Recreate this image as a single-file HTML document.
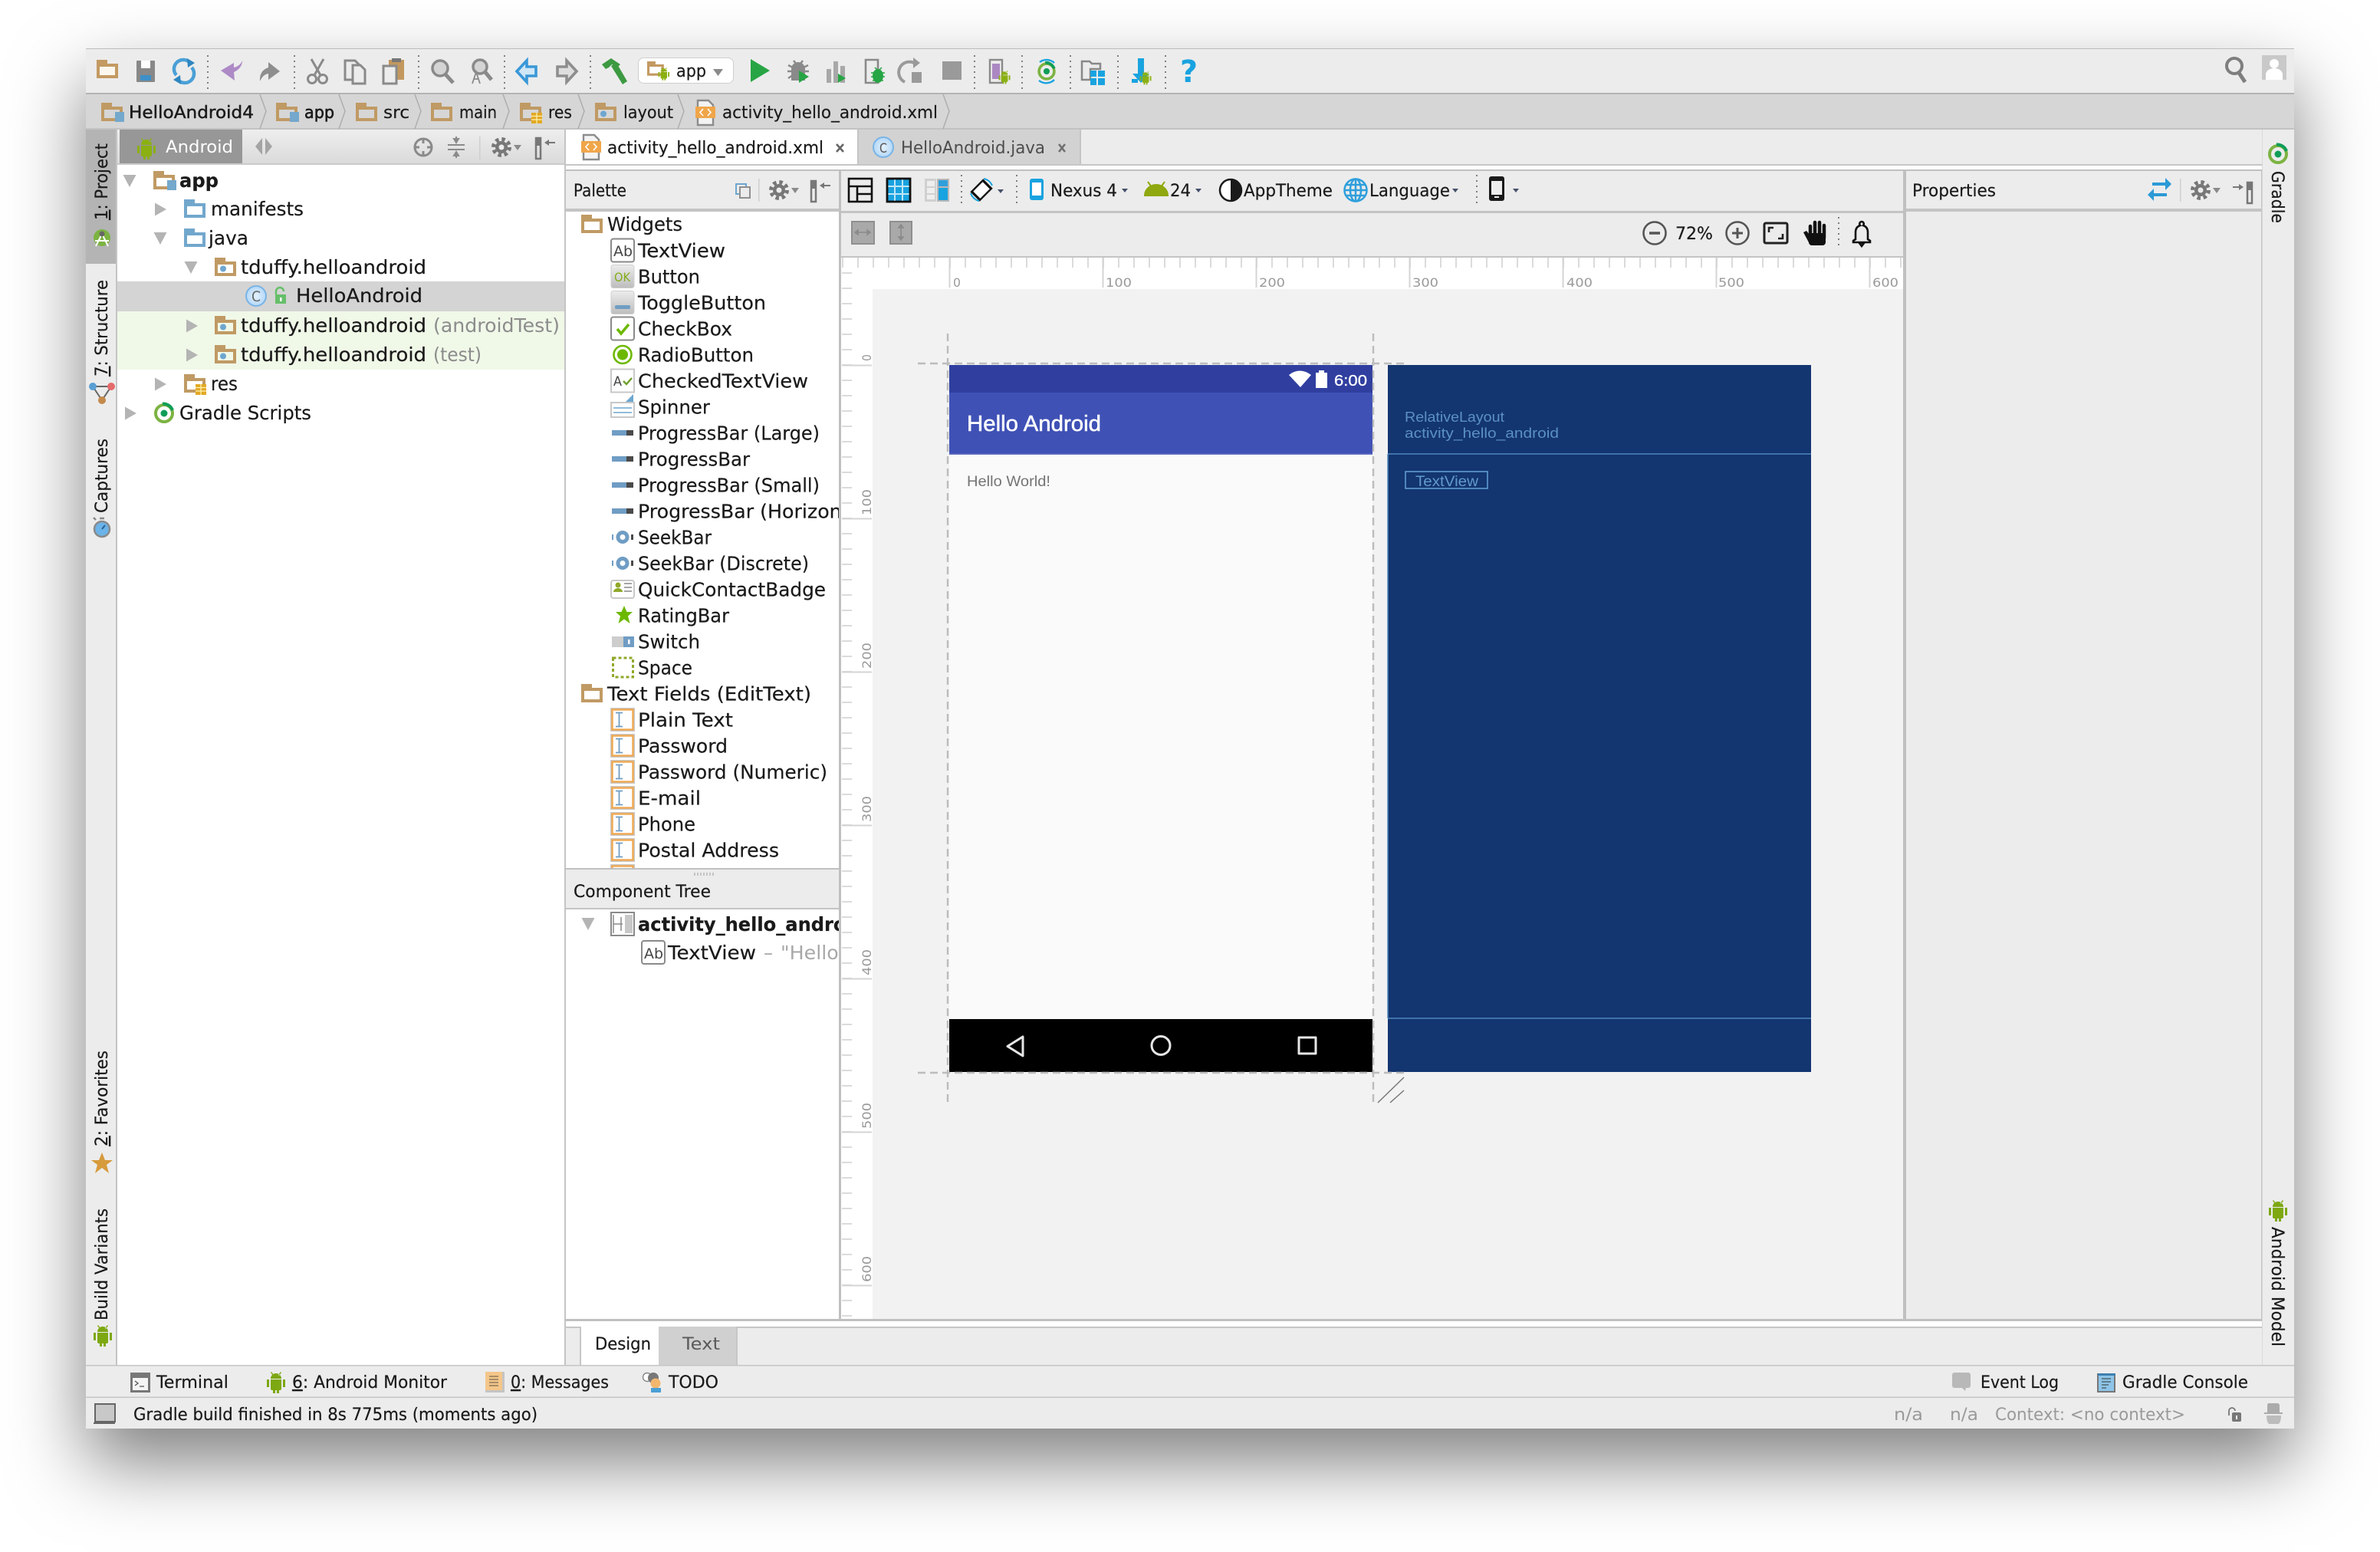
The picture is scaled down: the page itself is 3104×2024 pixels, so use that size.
<!DOCTYPE html>
<html><head><meta charset="utf-8"><title>Android Studio</title>
<style>
html,body{margin:0;padding:0;background:#fff;width:3104px;height:2024px;overflow:hidden}
#w{position:absolute;left:112px;top:63px;width:2880px;height:1800px;box-shadow:0 44px 90px rgba(0,0,0,.5);background:#ececec}
svg{position:absolute;left:0;top:0}
text{font-family:"DejaVu Sans","Liberation Sans",sans-serif;fill:#1a1a1a}
.t{font-size:25px;stroke:#1a1a1a;stroke-width:.2}.s{font-size:22px;stroke:#1a1a1a;stroke-width:.2}.g{fill:#8c8c8c;stroke:none}.r{font-size:16px;fill:#9a9a9a}.v{font-size:22px;stroke:#1a1a1a;stroke-width:.2}
.n{stroke:none}
.l{font-family:"Liberation Sans",sans-serif}
</style></head><body><div id="w"></div>
<svg width="3104" height="2024" viewBox="0 0 3104 2024" xmlns="http://www.w3.org/2000/svg">
<defs>
<linearGradient id="hdr" x1="0" y1="0" x2="0" y2="1"><stop offset="0" stop-color="#eeeeee"/><stop offset="1" stop-color="#dadada"/></linearGradient>
<linearGradient id="btn" x1="0" y1="0" x2="0" y2="1"><stop offset="0" stop-color="#ececec"/><stop offset="1" stop-color="#bdbdbd"/></linearGradient>
<radialGradient id="cc"><stop offset="0" stop-color="#e4f1fd"/><stop offset="1" stop-color="#b4d8f7"/></radialGradient>
<path id="f" d="M0 0h14v5h14v19H0zM4 9v11h20V9z"/>
<g id="a"><path d="M6 9a7 7 0 0 1 14 0zM6 10h14v12a2 2 0 0 1-2 2h-1v4h-3v-4h-2v4h-3v-4H8a2 2 0 0 1-2-2zM1 10h3v10H1zM22 10h3v10h-3zM7 0l3 4-1 1-3-4zM19 0l-3 4 1 1 3-4z"/></g>
<g id="gear"><circle r="8" fill="#777"/><circle r="10.5" fill="none" stroke="#777" stroke-width="5" stroke-dasharray="4.4 3.85"/><circle r="3.5" fill="#ececec"/></g>
<g id="pin"><rect x="0" y="0" width="6" height="27" fill="none" stroke="#777" stroke-width="2.5"/><rect x="0" y="0" width="6" height="10" fill="#777"/><path d="M11 6l6-4v3h8v2h-8v3z" fill="#777"/></g>
<g id="xml"><path d="M3 1h14l6 6v26H3z" fill="#f4f4f4" stroke="#8c8c8c" stroke-width="2.4"/><rect x="0" y="9" width="26" height="15" fill="#f0a64a"/><path d="M10 12l-4 4.500 4 4.500M16 12l4 4.500-4 4.500" fill="none" stroke="#fff" stroke-width="1.600"/></g>
<g id="pkg"><path d="M0 0h14v5h14v19H0zM4 9v11h20V9z" fill="#c09a64"/><circle cx="11" cy="14.500" r="4" fill="#6ea6cf"/></g>
<g id="mod"><path d="M0 0h14v5h14v19H0zM4 9v11h20V9z" fill="#c09a64"/><rect x="18" y="12" width="12" height="13" fill="#74a8cc"/></g>
<g id="resf"><path d="M0 0h14v5h14v19H0zM4 9v11h20V9z" fill="#c09a64"/><rect x="15" y="13" width="14" height="14" fill="#e2a925"/><path d="M15 17.500h14M15 22h14M22 13v14" stroke="#fff2b0" stroke-width="1.200"/></g>
<g id="chev"><path d="M0 0L8 22 0 45" fill="none" stroke="#aeaeae" stroke-width="1.500"/></g>
<g id="ab"><rect x="-15" y="-15" width="30" height="30" rx="3" fill="#fff" stroke="#8a8a8a" stroke-width="2"/></g>
<g id="pb"><rect x="-14" y="-3.500" width="19" height="7" fill="#709dc4"/><rect x="5" y="-3.500" width="9" height="7" fill="#4a4a4a"/></g>
<g id="sb"><circle r="6" fill="#fff" stroke="#709dc4" stroke-width="5"/><rect x="-14" y="-3.500" width="2" height="7" fill="#709dc4"/><rect x="11" y="-3.500" width="3" height="7" fill="#4a4a4a"/></g>
<g id="et"><rect x="-16" y="-15.500" width="32" height="31" fill="#c8c8c8"/><rect x="-13.500" y="-13" width="27" height="26" fill="#fff" stroke="#f0a850" stroke-width="2.400"/><path d="M-9-9h9M-4.500-9v18M-9 9h9" fill="none" stroke="#709dc4" stroke-width="1.800"/></g>
<g id="tri"><path d="M-8.500-8h17L0 8z" fill="#b4b4b4"/></g>
<g id="trr"><path d="M-7-8.500L8 0-7 8.500z" fill="#b4b4b4"/></g>
<g id="grad"><circle r="11" fill="none" stroke="#7cb342" stroke-width="4"/><path d="M-2-12.500A13 13 0 0 1 11-4" fill="none" stroke="#0f9d58" stroke-width="4"/><circle r="4.500" fill="#0f9d58"/></g>
<g id="cls"><circle r="13" fill="url(#cc)" stroke="#7ab4e6" stroke-width="2"/></g>
<path id="cdn" d="M0 0h8l-4 5z" fill="#46506a"/>
<path id="cgr" d="M0 0h10l-5 7z" fill="#8a8a8a"/>
</defs>

<!-- main toolbar -->
<rect x="112" y="63" width="2880" height="59" fill="#ececec"/>
<rect x="112" y="63" width="2880" height="1" fill="#bdbdbd"/>
<rect x="112" y="121" width="2880" height="2" fill="#b4b4b4"/>
<rect x="112" y="123" width="2880" height="45" fill="#d6d6d6"/>
<rect x="112" y="167" width="2880" height="2" fill="#c2c2c2"/>
<g stroke="#808080" stroke-width="2" stroke-dasharray="2 5">
<path d="M271 72v45M384 72v45M546 72v45M658 72v45M770 72v45M1271 72v45M1333 72v45M1396 72v45M1458 72v45M1520 72v45"/></g>
<use href="#f" transform="translate(126 78)" fill="#c39a62"/><rect x="130" y="87" width="20" height="11" fill="#fbf7ef"/>
<g transform="translate(190 93)"><rect x="-12" y="-14" width="24" height="28" rx="1" fill="#888"/><rect x="-6" y="-14" width="12" height="10" fill="#fff"/><rect x="-7" y="5" width="14" height="7" fill="#3e90c8"/></g>
<g transform="translate(240 93)"><g fill="none" stroke="#4aa0d6" stroke-width="4.500"><path d="M8-11A12 12 0 0 0-10 5"/><path d="M-8 11A12 12 0 0 0 10-5"/></g><path d="M4-17L14-11 5-5zM-4 17L-14 11-5 5z" fill="#2e86c1"/></g>
<path transform="translate(302 93)" d="M14-14C14-6 8-1 3 1L4 12-14-1 3-11 3-5C8-6 12-9 14-14z" fill="#ad8ac6"/>
<path transform="translate(352 93)" d="M-13 13Q-14-1-2-5V-12L13 0-2 11V3Q-9 4-13 13z" fill="#8e8e8e"/>
<g transform="translate(414 93)" fill="none" stroke="#8a8a8a" stroke-width="3"><path d="M-8-16L4 5M8-16L-4 5"/><circle cx="-7" cy="10" r="5.500"/><circle cx="7" cy="10" r="5.500"/></g>
<g transform="translate(463 93)" fill="#ececec" stroke="#8a8a8a" stroke-width="3"><path d="M-13-14h13l5 5v20h-18z"/><path d="M-3-8h10l6 6v18H-3z"/></g>
<g transform="translate(513 93)"><rect x="-6" y="-15" width="20" height="26" fill="#c2985f"/><rect x="-2" y="-17" width="12" height="5" fill="#777"/><path d="M-13-7H4v23h-17z" fill="#ececec" stroke="#8a8a8a" stroke-width="3"/></g>
<g transform="translate(576 93)"><circle cx="-2" cy="-4" r="10" fill="#d4d4d4" stroke="#8a8a8a" stroke-width="3.500"/><path d="M5 4l10 11" stroke="#8a8a8a" stroke-width="5"/></g>
<g transform="translate(626 93)"><circle cx="0" cy="-6" r="9" fill="#d4d4d4" stroke="#8a8a8a" stroke-width="3.500"/><path d="M6 0l9 11" stroke="#8a8a8a" stroke-width="5"/><path d="M-10 16l5-15 5 15M-8 10h6" fill="none" stroke="#8a8a8a" stroke-width="1.800"/></g>
<path transform="translate(687 93)" d="M-13 0L0-14V-6H12V6H0V14z" fill="#d0e7f6" stroke="#3a98d8" stroke-width="3.600"/>
<path transform="translate(739 93)" d="M13 0L0-14V-6H-12V6H0V14z" fill="#dedede" stroke="#8e8e8e" stroke-width="3.600"/>
<g transform="translate(801 93)" fill="#3c9a42"><path d="M-16-9L-4-17 8-9 4-5-3-9-7-5-11-3z"/><path d="M-4-7L3-11 17 13 11 17z"/></g>
<rect x="832.500" y="75.500" width="124" height="33" rx="7" fill="#fff" stroke="#cfcfcf"/>
<use href="#f" transform="translate(844 80) scale(.78)" fill="#c39a62"/><use href="#a" transform="translate(858 88) scale(.6)" fill="#8bb011"/>
<text class="s" x="882" y="100" textLength="39" lengthAdjust="spacingAndGlyphs">app</text>
<use href="#cgr" transform="translate(930 90) scale(1.300)"/>
<path d="M979 77L1004 92 979 107z" fill="#27a544"/>
<g transform="translate(1041 93)"><circle cy="-3" r="9" fill="#8a8a8a"/><path d="M-13-8L-7-5M13-8L7-5M-14 0h6M14 0h-6M-13 9l6-4M-6-14l3 4M6-14l-3 4" stroke="#8a8a8a" stroke-width="2.500"/><rect x="-9" y="-3" width="18" height="15" fill="#8a8a8a"/><path d="M1-1L14 7 1 15z" fill="#27a544"/></g>
<g transform="translate(1089 93)" fill="#a8a8a8"><rect x="-11" y="-3" width="6" height="18"/><rect x="-2" y="-13" width="6" height="28"/><rect x="7" y="-7" width="6" height="22"/><path d="M4 3l10 6-10 6z" fill="#27a544"/></g>
<g transform="translate(1139 93)"><path d="M-10-15h16v30h-16z" fill="#ececec" stroke="#8a8a8a" stroke-width="2.600"/><ellipse cx="6" cy="6" rx="7" ry="9" fill="#27a544"/><path d="M-3 2h18M-3 7h18M-1 12h14M2-5l3 3M11-5l-3 3" stroke="#27a544" stroke-width="1.500"/></g>
<g transform="translate(1189 93)"><path d="M-9 14A12 12 0 0 1 3-11" fill="none" stroke="#9a9a9a" stroke-width="4"/><path d="M2-18l9 7-9 7z" fill="#9a9a9a"/><rect x="0" y="1" width="13" height="14" fill="#9a9a9a"/></g>
<rect x="1229" y="80" width="25" height="24" fill="#9a9a9a"/>
<g transform="translate(1303 93)"><rect x="-12" y="-15" width="16" height="30" fill="#ececec" stroke="#8a8a8a" stroke-width="2.400"/><rect x="-9" y="-10" width="10" height="20" fill="#ab88c2"/><use href="#a" transform="translate(-1 -1) scale(.62)" fill="#8bb011"/></g>
<g transform="translate(1365 93)"><use href="#grad" transform="scale(.9)"/><path d="M-9-12A15 15 0 0 1 10-11M-10 12A15 15 0 0 0 10 11" fill="none" stroke="#19a3e0" stroke-width="2.400"/></g>
<g transform="translate(1425 93)"><path d="M-14-13h10l3 3h11v7H-3v14h-11z" fill="none" stroke="#888" stroke-width="2.500"/><rect x="-3" y="-1" width="8" height="8" fill="#19a3e0"/><rect x="7" y="-1" width="9" height="8" fill="#19a3e0"/><rect x="-3" y="9" width="8" height="9" fill="#19a3e0"/><rect x="7" y="9" width="9" height="9" fill="#19a3e0"/></g>
<g transform="translate(1488 93)"><path d="M-4-17h8V3h7L0 15-11 3h7z" fill="#19a3e0"/><rect x="-12" y="10" width="8" height="5" fill="#19a3e0"/><use href="#a" transform="translate(-2 0) scale(.62)" fill="#8bb011"/></g>
<text x="1539" y="107" textLength="23" lengthAdjust="spacingAndGlyphs" style="font-size:40px;font-weight:bold;fill:#19a3e0">?</text>
<g transform="translate(2914 86)"><circle r="10" fill="none" stroke="#7e7e7e" stroke-width="4"/><path d="M6 9l8 12" stroke="#7e7e7e" stroke-width="5"/></g>
<rect x="2950" y="72" width="32" height="32" fill="#c9c9c9"/><circle cx="2966" cy="83" r="6" fill="#fff"/><path d="M2955 104v-7a11 8 0 0 1 22 0v7z" fill="#fff"/>

<!-- breadcrumbs -->
<use href="#mod" transform="translate(132 134)"/><text class="s" x="168" y="154" textLength="163" lengthAdjust="spacingAndGlyphs" style="stroke-width:.45">HelloAndroid4</text>
<use href="#chev" transform="translate(339 123)"/>
<use href="#mod" transform="translate(360 134)"/><text class="s" x="397" y="154" textLength="39" lengthAdjust="spacingAndGlyphs" style="stroke-width:.6">app</text>
<use href="#chev" transform="translate(442 123)"/>
<use href="#f" transform="translate(464 134)" fill="#c09a64"/><text class="s" x="500" y="154" textLength="34" lengthAdjust="spacingAndGlyphs">src</text>
<use href="#chev" transform="translate(541 123)"/>
<use href="#f" transform="translate(562 134)" fill="#c09a64"/><text class="s" x="599" y="154" textLength="49" lengthAdjust="spacingAndGlyphs">main</text>
<use href="#chev" transform="translate(656 123)"/>
<use href="#resf" transform="translate(678 134)"/><text class="s" x="715" y="154" textLength="31" lengthAdjust="spacingAndGlyphs">res</text>
<use href="#chev" transform="translate(754 123)"/>
<use href="#pkg" transform="translate(776 134)"/><text class="s" x="813" y="154" textLength="65" lengthAdjust="spacingAndGlyphs">layout</text>
<use href="#chev" transform="translate(884 123)"/>
<use href="#xml" transform="translate(907 130)"/><text class="s" x="942" y="154" textLength="281" lengthAdjust="spacingAndGlyphs">activity_hello_android.xml</text>
<use href="#chev" transform="translate(1230 123)"/>

<!-- left tool strip -->
<rect x="112" y="169" width="40" height="1611" fill="#ececec"/>
<rect x="112" y="169" width="39" height="175" fill="#b4b4b4"/>
<rect x="151" y="169" width="2" height="1611" fill="#c4c4c4"/>
<text class="v" transform="translate(140 287) rotate(-90)" textLength="100" lengthAdjust="spacingAndGlyphs"><tspan text-decoration="underline">1</tspan>: Project</text>
<text class="v" transform="translate(140 491) rotate(-90)" textLength="126" lengthAdjust="spacingAndGlyphs"><tspan text-decoration="underline">7</tspan>: Structure</text>
<text class="v" transform="translate(140 669) rotate(-90)" textLength="97" lengthAdjust="spacingAndGlyphs">Captures</text>
<text class="v" transform="translate(140 1495) rotate(-90)" textLength="125" lengthAdjust="spacingAndGlyphs"><tspan text-decoration="underline">2</tspan>: Favorites</text>
<text class="v" transform="translate(140 1722) rotate(-90)" textLength="146" lengthAdjust="spacingAndGlyphs">Build Variants</text>
<g transform="translate(133 310)"><circle r="11" fill="#7cb342"/><path d="M-8 11L0-5 8 11M-9 4H9" fill="none" stroke="#fff" stroke-width="2"/><circle cy="-5" r="3.500" fill="#666"/></g>
<g transform="translate(133 512)"><path d="M-12-8L0 10 12-8M-12-8H12" fill="none" stroke="#666" stroke-width="2"/><circle cx="-12" cy="-8" r="5" fill="#5a9fd4"/><circle cx="12" cy="-8" r="5" fill="#e56a6a"/><circle cx="0" cy="10" r="5" fill="#c48a4a"/></g>
<g transform="translate(133 690)"><circle r="10" fill="#6bb3e8" stroke="#8a8a8a" stroke-width="2.500"/><path d="M0 0l4-5" stroke="#2a5f8f" stroke-width="2"/><path d="M-3-14h6M-8-12l-3-3" stroke="#8a8a8a" stroke-width="2.500"/></g>
<path transform="translate(133 1517)" d="M0-14L4-4 14-4 6 2 9 13 0 6-9 13-6 2-14-4-4-4z" fill="#d79a3c"/>
<use href="#a" transform="translate(121 1728)" fill="#7da812"/>

<!-- right tool strip -->
<rect x="2950" y="169" width="42" height="1611" fill="#ececec"/>
<rect x="2949" y="169" width="1.500" height="1611" fill="#c4c4c4"/>
<use href="#grad" transform="translate(2971 201)"/>
<text class="v" transform="translate(2963 223) rotate(90)" textLength="68" lengthAdjust="spacingAndGlyphs">Gradle</text>
<use href="#a" transform="translate(2958 1565)" fill="#7da812"/>
<text class="v" transform="translate(2963 1600) rotate(90)" textLength="156" lengthAdjust="spacingAndGlyphs">Android Model</text>

<!-- project panel -->
<rect x="153" y="169" width="584" height="1611" fill="#fff"/>
<rect x="153" y="169" width="583" height="45" fill="url(#hdr)"/>
<rect x="153" y="213" width="583" height="2" fill="#cbcbcb"/>
<rect x="156" y="169" width="160" height="44" fill="#979797"/>
<use href="#a" transform="translate(178 180)" fill="#8bb011"/>
<text class="s n" x="216" y="199" textLength="88" lengthAdjust="spacingAndGlyphs" style="fill:#fff">Android</text>
<path d="M342 180L333 191 342 202zM346 180L355 191 346 202z" fill="#a4a4a4"/>
<g transform="translate(552 192)" fill="none" stroke="#8a8a8a" stroke-width="3"><circle r="11"/><path d="M0-12v7M0 12V5M-12 0h7M12 0H5"/></g>
<g transform="translate(595 192)" stroke="#8a8a8a" stroke-width="2" fill="#8a8a8a"><path d="M-11-3H11M-11 3H11" fill="none"/><path d="M0-6l-3-5h6zM0 6l-3 5h6z"/><path d="M0-14v6M0 14V8"/></g>
<rect x="625" y="178" width="1.500" height="30" fill="#cfcfcf"/>
<use href="#gear" transform="translate(654 192)"/><use href="#cgr" transform="translate(670 189)"/>
<use href="#pin" transform="translate(699 180)"/>

<rect x="153" y="367" width="583" height="39" fill="#d4d4d4"/>
<rect x="153" y="406" width="583" height="76" fill="#f0f8e8"/>

<use href="#tri" transform="translate(169 236)"/>
<use href="#mod" transform="translate(200 223)"/>
<text class="t" x="234" y="244" textLength="51" lengthAdjust="spacingAndGlyphs" style="font-weight:bold">app</text>
<use href="#trr" transform="translate(209 273)"/>
<use href="#f" transform="translate(240 260)" fill="#72a7cc"/>
<text class="t" x="275" y="281" textLength="121" lengthAdjust="spacingAndGlyphs">manifests</text>
<use href="#tri" transform="translate(209 311)"/>
<use href="#f" transform="translate(240 298)" fill="#72a7cc"/>
<text class="t" x="272" y="319" textLength="52" lengthAdjust="spacingAndGlyphs">java</text>
<use href="#tri" transform="translate(249 349)"/>
<use href="#pkg" transform="translate(280 336)"/>
<text class="t" x="314" y="357" textLength="242" lengthAdjust="spacingAndGlyphs">tduffy.helloandroid</text>
<use href="#cls" transform="translate(334 386)"/>
<text x="328" y="393" textLength="12" lengthAdjust="spacingAndGlyphs" style="font-size:19px;fill:#666">C</text>
<g transform="translate(365 386)"><rect x="-6" y="-2" width="14" height="12" fill="#66bf6a"/><path d="M-5-2v-4a5 5 0 0 1 10 0" fill="none" stroke="#66bf6a" stroke-width="2.500"/><rect x="0" y="2" width="2.500" height="5" fill="#fff"/></g>
<text class="t" x="386" y="394" textLength="165" lengthAdjust="spacingAndGlyphs">HelloAndroid</text>
<use href="#trr" transform="translate(250 425)"/>
<use href="#pkg" transform="translate(280 412)"/>
<text class="t" x="314" y="433" textLength="242" lengthAdjust="spacingAndGlyphs">tduffy.helloandroid</text>
<text class="t g" x="565" y="433" textLength="165" lengthAdjust="spacingAndGlyphs">(androidTest)</text>
<use href="#trr" transform="translate(250 463)"/>
<use href="#pkg" transform="translate(280 450)"/>
<text class="t" x="314" y="471" textLength="242" lengthAdjust="spacingAndGlyphs">tduffy.helloandroid</text>
<text class="t g" x="565" y="471" textLength="63" lengthAdjust="spacingAndGlyphs">(test)</text>
<use href="#trr" transform="translate(209 501)"/>
<use href="#resf" transform="translate(240 488)"/>
<text class="t" x="275" y="509" textLength="35" lengthAdjust="spacingAndGlyphs">res</text>
<use href="#trr" transform="translate(170 539)"/>
<use href="#grad" transform="translate(214 539)"/>
<text class="t" x="234" y="547" textLength="172" lengthAdjust="spacingAndGlyphs">Gradle Scripts</text>
<rect x="736" y="169" width="2" height="1611" fill="#c4c4c4"/>

<!-- tab bar -->
<rect x="738" y="169" width="2212" height="45" fill="#ececec"/>
<rect x="738" y="169" width="380" height="45" fill="#fff"/>
<rect x="1118" y="169" width="291" height="45" fill="#d2d2d2"/><rect x="1118" y="169" width="2" height="45" fill="#c4c4c4"/><rect x="1408" y="169" width="2" height="45" fill="#c4c4c4"/>
<use href="#xml" transform="translate(758 175)"/>
<text class="s" x="792" y="200" textLength="282" lengthAdjust="spacingAndGlyphs">activity_hello_android.xml</text>
<path d="M1091 188l9 10M1100 188l-9 10" stroke="#666" stroke-width="2.600"/>
<use href="#cls" transform="translate(1152 192)"/>
<text x="1147" y="199" textLength="10" lengthAdjust="spacingAndGlyphs" style="font-size:17px;fill:#555">C</text>
<text class="s n" x="1175" y="200" textLength="188" lengthAdjust="spacingAndGlyphs" style="fill:#4c4c4c">HelloAndroid.java</text>
<path d="M1381 188l8 10M1389 188l-8 10" stroke="#707070" stroke-width="2.600"/>
<rect x="738" y="214" width="2212" height="2" fill="#c6c6c6"/>
<rect x="738" y="216" width="2212" height="5" fill="#fff"/>
<rect x="738" y="221" width="2212" height="2" fill="#c0c0c0"/>

<!-- palette -->
<rect x="738" y="223" width="356" height="49" fill="#ececec"/>
<rect x="738" y="272" width="356" height="4" fill="#c4c4c4"/>
<rect x="738" y="276" width="356" height="1446" fill="#fff"/>
<text class="s" x="748" y="256" textLength="69" lengthAdjust="spacingAndGlyphs">Palette</text>
<g transform="translate(960 240)" fill="#ececec"><rect x="0" y="0" width="13" height="13" stroke="#6ea6cf" stroke-width="2"/><rect x="5" y="4" width="13" height="14" stroke="#909090" stroke-width="2"/></g>
<rect x="989" y="233" width="1.500" height="30" fill="#cfcfcf"/>
<use href="#gear" transform="translate(1016 248)"/><use href="#cgr" transform="translate(1032 245)"/>
<use href="#pin" transform="translate(1058 236)"/>

<use href="#f" transform="translate(758 280)" fill="#c09a64"/>
<text class="t" x="792" y="301" textLength="98" lengthAdjust="spacingAndGlyphs">Widgets</text>

<use href="#ab" transform="translate(812 326.500)"/><text x="800" y="334" textLength="25" lengthAdjust="spacingAndGlyphs" style="font-size:19px;fill:#444">Ab</text>
<text class="t" x="832" y="335.500" textLength="114" lengthAdjust="spacingAndGlyphs">TextView</text>
<rect x="797" y="345.500" width="30" height="30" rx="3" fill="url(#btn)" stroke="#cfcfcf"/><text x="801" y="367" textLength="21" lengthAdjust="spacingAndGlyphs" style="font-size:16px;fill:#84ad1a">OK</text>
<text class="t" x="832" y="369.500" textLength="81" lengthAdjust="spacingAndGlyphs">Button</text>
<rect x="797" y="379.500" width="30" height="30" rx="3" fill="url(#btn)" stroke="#cfcfcf"/><rect x="802" y="398" width="20" height="5" rx="2" fill="#709dc4"/>
<text class="t" x="832" y="403.500" textLength="167" lengthAdjust="spacingAndGlyphs">ToggleButton</text>
<use href="#ab" transform="translate(812 428.500)"/><path d="M805 429l5 6 10-12" fill="none" stroke="#6cb800" stroke-width="3.600"/>
<text class="t" x="832" y="437.500" textLength="123" lengthAdjust="spacingAndGlyphs">CheckBox</text>
<circle cx="812" cy="462.500" r="11.500" fill="#fff" stroke="#6cb800" stroke-width="2.600"/><circle cx="812" cy="462.500" r="7" fill="#6cb800"/>
<text class="t" x="832" y="471.500" textLength="151" lengthAdjust="spacingAndGlyphs">RadioButton</text>
<rect x="797" y="481.500" width="30" height="30" fill="#fff" stroke="#c8c8c8" stroke-width="2"/><text x="800" y="503" textLength="11" lengthAdjust="spacingAndGlyphs" style="font-size:17px;fill:#444">A</text><path d="M813 497l4 4 7-8" fill="none" stroke="#6e9e2a" stroke-width="2.400"/>
<text class="t" x="832" y="505.500" textLength="222" lengthAdjust="spacingAndGlyphs">CheckedTextView</text>
<path d="M826 514v10h-10z" fill="#6ea6cf"/><rect x="797" y="525" width="30" height="19" fill="#fff" stroke="#c8c8c8" stroke-width="2"/><path d="M800 532h24M800 538h24" stroke="#6ea6cf" stroke-width="1.600"/>
<text class="t" x="832" y="539.500" textLength="94" lengthAdjust="spacingAndGlyphs">Spinner</text>
<use href="#pb" transform="translate(812 564.500)"/>
<text class="t" x="832" y="573.500" textLength="237" lengthAdjust="spacingAndGlyphs">ProgressBar (Large)</text>
<use href="#pb" transform="translate(812 598.500)"/>
<text class="t" x="832" y="607.500" textLength="146" lengthAdjust="spacingAndGlyphs">ProgressBar</text>
<use href="#pb" transform="translate(812 632.500)"/>
<text class="t" x="832" y="641.500" textLength="237" lengthAdjust="spacingAndGlyphs">ProgressBar (Small)</text>
<use href="#pb" transform="translate(812 666.500)"/>
<text class="t" x="832" y="675.500" textLength="308" lengthAdjust="spacingAndGlyphs">ProgressBar (Horizontal)</text>
<use href="#sb" transform="translate(812 700.500)"/>
<text class="t" x="832" y="709.500" textLength="96" lengthAdjust="spacingAndGlyphs">SeekBar</text>
<use href="#sb" transform="translate(812 734.500)"/>
<text class="t" x="832" y="743.500" textLength="223" lengthAdjust="spacingAndGlyphs">SeekBar (Discrete)</text>
<rect x="797" y="757" width="30" height="23" rx="3" fill="#fff" stroke="#c8c8c8" stroke-width="2"/><circle cx="806" cy="763" r="3.500" fill="#8fa92a"/><path d="M800 772a6 5 0 0 1 12 0z" fill="#8fa92a"/><path d="M814 761h10M814 766h10M814 771h10" stroke="#999" stroke-width="1.800"/>
<text class="t" x="832" y="777.500" textLength="245" lengthAdjust="spacingAndGlyphs">QuickContactBadge</text>
<path transform="translate(814 802)" d="M0-12L3.500-4 11-4 5 1.500 7.500 11 0 5.500-7.500 11-5 1.500-11-4-3.500-4z" fill="#6cb800"/>
<text class="t" x="832" y="811.500" textLength="119" lengthAdjust="spacingAndGlyphs">RatingBar</text>
<rect x="798" y="830" width="15" height="14" fill="#cdcdcd"/><rect x="813" y="830" width="14" height="14" fill="#709dc4"/><rect x="819" y="834" width="2.500" height="6" fill="#fff"/>
<text class="t" x="832" y="845.500" textLength="81" lengthAdjust="spacingAndGlyphs">Switch</text>
<rect x="799.500" y="858" width="26" height="25" fill="none" stroke="#8fa92a" stroke-width="3" stroke-dasharray="4 3"/>
<text class="t" x="832" y="879.500" textLength="71" lengthAdjust="spacingAndGlyphs">Space</text>
<use href="#f" transform="translate(758 892)" fill="#c09a64"/>
<text class="t" x="792" y="913.500" textLength="266" lengthAdjust="spacingAndGlyphs">Text Fields (EditText)</text>
<use href="#et" transform="translate(812 938.500)"/><text class="t" x="832" y="947.500" textLength="124" lengthAdjust="spacingAndGlyphs">Plain Text</text>
<use href="#et" transform="translate(812 972.500)"/><text class="t" x="832" y="981.500" textLength="117" lengthAdjust="spacingAndGlyphs">Password</text>
<use href="#et" transform="translate(812 1006.500)"/><text class="t" x="832" y="1015.500" textLength="247" lengthAdjust="spacingAndGlyphs">Password (Numeric)</text>
<use href="#et" transform="translate(812 1040.500)"/><text class="t" x="832" y="1049.500" textLength="82" lengthAdjust="spacingAndGlyphs">E-mail</text>
<use href="#et" transform="translate(812 1074.500)"/><text class="t" x="832" y="1083.500" textLength="75" lengthAdjust="spacingAndGlyphs">Phone</text>
<use href="#et" transform="translate(812 1108.500)"/><text class="t" x="832" y="1117.500" textLength="184" lengthAdjust="spacingAndGlyphs">Postal Address</text>
<use href="#et" transform="translate(812 1142.500)"/>

<rect x="738" y="1132" width="356" height="2" fill="#c0c0c0"/>
<rect x="738" y="1134" width="356" height="50" fill="#ececec"/>
<rect x="738" y="1184" width="356" height="2" fill="#c4c4c4"/>
<rect x="738" y="1186" width="356" height="536" fill="#fff"/>
<path d="M905 1140h26" stroke="#c4c4c4" stroke-width="4" stroke-dasharray="2 2"/>
<text class="s" x="748" y="1170" textLength="179" lengthAdjust="spacingAndGlyphs">Component Tree</text>
<use href="#tri" transform="translate(767 1205)"/>
<rect x="797" y="1190" width="30" height="30" fill="#fff" stroke="#8a8a8a" stroke-width="2"/><rect x="815" y="1193" width="10" height="24" fill="#c8c8c8"/><path d="M800 1193v24M800 1205h12M810 1196v18" fill="none" stroke="#8a8a8a" stroke-width="1.500"/>
<text class="t" x="832" y="1214" textLength="297" lengthAdjust="spacingAndGlyphs" style="font-weight:bold">activity_hello_android</text>
<use href="#ab" transform="translate(852 1242)"/><text x="840" y="1250" textLength="25" lengthAdjust="spacingAndGlyphs" style="font-size:19px;fill:#444">Ab</text>
<text class="t" x="871" y="1251" textLength="115" lengthAdjust="spacingAndGlyphs">TextView</text>
<text class="t n" x="996" y="1251" textLength="12" lengthAdjust="spacingAndGlyphs" style="fill:#a8a8a8">–</text>
<text class="t n" x="1018" y="1251" textLength="178" lengthAdjust="spacingAndGlyphs" style="fill:#a8a8a8">"Hello World!"</text>

<!-- design surface chrome -->
<rect x="1094" y="223" width="1392" height="1500" fill="#ececec"/>
<rect x="1094" y="223" width="3" height="1500" fill="#c0c0c0"/>
<rect x="1097" y="275" width="1386" height="3" fill="#c4c4c4"/>
<rect x="1097" y="334" width="1386" height="2" fill="#c4c4c4"/>
<g fill="none" stroke-width="2.600">
<g stroke="#111"><rect x="1107" y="233" width="30" height="30"/><path d="M1107 243h30M1118 243v20M1118 253h19"/></g>
<g stroke="#111"><rect x="1157" y="233" width="30" height="30" fill="#19a3e0"/><path d="M1157 243h30M1157 253h30M1167 233v30M1177 233v30" stroke="#bfe6f8" stroke-width="2"/><rect x="1157" y="233" width="30" height="30"/></g>
</g>
<rect x="1206" y="233" width="15" height="30" fill="#d0d0d0"/><rect x="1209" y="236" width="10" height="7" fill="#eee"/><rect x="1209" y="245" width="10" height="7" fill="#eee"/><rect x="1209" y="254" width="10" height="6" fill="#eee"/><rect x="1222" y="233" width="16" height="30" fill="#b8b8b8"/><rect x="1224" y="235" width="12" height="8" fill="#2f9fdc"/><rect x="1224" y="245" width="12" height="16" fill="#19a3e0"/>
<g stroke="#808080" stroke-width="2" stroke-dasharray="2 5"><path d="M1254 228v40M1326 228v40M1926 228v40"/></g>
<g transform="translate(1280 248)"><rect x="-9" y="-9" width="18" height="18" transform="rotate(45) scale(.85 1.150)" fill="#fff" stroke="#111" stroke-width="2.800"/><path d="M-14 4A15 15 0 0 0-3 14M3-15A15 15 0 0 1 14-6" fill="none" stroke="#19a3e0" stroke-width="2"/></g>
<use href="#cdn" transform="translate(1301 247)"/>
<rect x="1343" y="233" width="18" height="28" rx="3" fill="#19a3e0"/><rect x="1346" y="238" width="12" height="17" fill="#fff"/>
<text class="s" x="1370" y="256" textLength="87" lengthAdjust="spacingAndGlyphs">Nexus 4</text><use href="#cdn" transform="translate(1463 246)"/>
<path d="M1493 255a15 14 0 0 1 30 0zM1497 237l5 7M1519 237l-5 7" fill="#8fa80f" stroke="#8fa80f" stroke-width="2"/>
<text class="s" x="1526" y="256" textLength="27" lengthAdjust="spacingAndGlyphs">24</text><use href="#cdn" transform="translate(1559 246)"/>
<circle cx="1605" cy="248" r="14" fill="#fff" stroke="#1a1a1a" stroke-width="2.500"/><path d="M1605 234a14 14 0 0 1 0 28z" fill="#1a1a1a"/>
<text class="s" x="1622" y="256" textLength="116" lengthAdjust="spacingAndGlyphs">AppTheme</text>
<g transform="translate(1768 248)" fill="none" stroke="#2f9fdc" stroke-width="2.500"><circle r="14.500"/><ellipse rx="7" ry="14.500"/><path d="M0-14.500v29M-14.500 0h29M-12-7h24M-12 7h24"/></g>
<text class="s" x="1786" y="256" textLength="105" lengthAdjust="spacingAndGlyphs">Language</text><use href="#cdn" transform="translate(1894 246)"/>
<rect x="1942" y="230" width="20" height="32" rx="3" fill="#1a1a1a"/><rect x="1945" y="236" width="14" height="18" fill="#eee"/><rect x="1949" y="256" width="6" height="2" fill="#eee"/>
<use href="#cdn" transform="translate(1973 246)"/>
<rect x="1111" y="289" width="29" height="29" fill="#a9a9a9" stroke="#8f8f8f" stroke-width="2"/><path d="M1115 303h20M1115 303l4-3v6zM1135 303l-4-3v6z" stroke="#8b8b8b" stroke-width="1.600" fill="#8b8b8b"/>
<rect x="1161" y="289" width="28" height="29" fill="#a9a9a9" stroke="#8f8f8f" stroke-width="2"/><path d="M1175 293v20M1175 293l-3 4h6zM1175 313l-3-4h6z" stroke="#8b8b8b" stroke-width="1.600" fill="#8b8b8b"/>
<g fill="none" stroke="#555" stroke-width="2.600"><circle cx="2158" cy="304" r="14.500"/><path d="M2151 304h14" stroke-width="3.500"/><circle cx="2266" cy="304" r="14.500"/><path d="M2259 304h14M2266 297v14" stroke-width="3"/></g>
<text class="s" x="2185" y="312" textLength="49" lengthAdjust="spacingAndGlyphs">72%</text>
<rect x="2301" y="291" width="30" height="26" rx="2" fill="none" stroke="#222" stroke-width="3"/><path d="M2307 303v-6h6M2325 305v6h-6" fill="none" stroke="#222" stroke-width="2.600"/>
<g fill="#111"><rect x="2359" y="304" width="22" height="16" rx="4"/><path d="M2361 310V295M2367 310V290M2373 310V290M2379 310V294" stroke="#111" stroke-width="4.500" stroke-linecap="round"/><path d="M2352 303l4-2 7 9-3 8z"/></g>
<path d="M2398 283v42" stroke="#808080" stroke-width="2" stroke-dasharray="2 5"/>
<path d="M2428 289a3 3 0 0 1 2 5q6 2 6 9v9l3 2v2h-22v-2l3-2v-9q0-7 6-9a3 3 0 0 1 2-5zM2425 317h6l-3 4z" fill="none" stroke="#111" stroke-width="2.600"/>

<!-- ruler + canvas -->
<rect x="1097" y="336" width="1385" height="41" fill="#fff"/>
<rect x="1097" y="336" width="41" height="1385" fill="#fff"/>
<rect x="1138" y="377" width="1345" height="1344" fill="#f2f2f2"/>
<path d="M1098 342.500H2482" stroke="#dbdbdb" stroke-width="13" stroke-dasharray="2 18"/>
<path d="M1104.500 355V1720" stroke="#dbdbdb" stroke-width="13" stroke-dasharray="2 18"/>
<path d="M1238.500 336v39M1438.500 336v39M1638.500 336v39M1838.500 336v39M2038.500 336v39M2238.500 336v39M2438.500 336v39" stroke="#d4d4d4" stroke-width="2"/>
<path d="M1098 476.500h39M1098 676.500h39M1098 876.500h39M1098 1076.500h39M1098 1276.500h39M1098 1476.500h39M1098 1676.500h39" stroke="#d4d4d4" stroke-width="2"/>
<text class="r" x="1243" y="374" textLength="10" lengthAdjust="spacingAndGlyphs">0</text>
<text class="r" x="1442" y="374" textLength="34" lengthAdjust="spacingAndGlyphs">100</text>
<text class="r" x="1642" y="374" textLength="34" lengthAdjust="spacingAndGlyphs">200</text>
<text class="r" x="1842" y="374" textLength="34" lengthAdjust="spacingAndGlyphs">300</text>
<text class="r" x="2043" y="374" textLength="34" lengthAdjust="spacingAndGlyphs">400</text>
<text class="r" x="2241" y="374" textLength="34" lengthAdjust="spacingAndGlyphs">500</text>
<text class="r" x="2442" y="374" textLength="34" lengthAdjust="spacingAndGlyphs">600</text>
<text class="r" transform="translate(1136 471) rotate(-90)" textLength="9" lengthAdjust="spacingAndGlyphs">0</text>
<text class="r" transform="translate(1136 672) rotate(-90)" textLength="34" lengthAdjust="spacingAndGlyphs">100</text>
<text class="r" transform="translate(1136 872) rotate(-90)" textLength="34" lengthAdjust="spacingAndGlyphs">200</text>
<text class="r" transform="translate(1136 1072) rotate(-90)" textLength="34" lengthAdjust="spacingAndGlyphs">300</text>
<text class="r" transform="translate(1136 1272) rotate(-90)" textLength="34" lengthAdjust="spacingAndGlyphs">400</text>
<text class="r" transform="translate(1136 1472) rotate(-90)" textLength="34" lengthAdjust="spacingAndGlyphs">500</text>
<text class="r" transform="translate(1136 1672) rotate(-90)" textLength="34" lengthAdjust="spacingAndGlyphs">600</text>

<!-- phone -->
<rect x="1238" y="476" width="552" height="922" fill="#fafafa"/>
<rect x="1238" y="476" width="552" height="36" fill="#303f9f"/>
<rect x="1238" y="512" width="552" height="80" fill="#3f51b5"/>
<rect x="1238" y="591.500" width="552" height="1.500" fill="#6674c4"/>
<rect x="1238" y="1329" width="552" height="69" fill="#000"/>
<path d="M1681 489q14-11 29 0l-14 16z" fill="#fff"/>
<rect x="1716" y="486" width="15" height="20" fill="#fff"/><rect x="1720" y="483" width="7" height="3" fill="#fff"/>
<text class="l" x="1740" y="503" textLength="43" lengthAdjust="spacingAndGlyphs" style="font-size:20px;fill:#fff;stroke:#fff;stroke-width:.3">6:00</text>
<text class="l" x="1261" y="562" textLength="175" lengthAdjust="spacingAndGlyphs" style="font-size:29px;fill:#fff;stroke:#fff;stroke-width:.5">Hello Android</text>
<text class="l" x="1261" y="634" textLength="109" lengthAdjust="spacingAndGlyphs" style="font-size:19.500px;fill:#747474">Hello World!</text>
<g fill="none" stroke="#e6e6e6" stroke-width="3" stroke-linejoin="round"><path d="M1334 1352v25l-20-12.500z"/><ellipse cx="1514" cy="1363.500" rx="12" ry="12"/><rect x="1694" y="1353" width="22" height="21"/></g>
<!-- blueprint -->
<rect x="1810" y="476" width="552" height="922" fill="#133570"/>
<path d="M1810 592h552M1810 1328h552M1810 592v736" fill="none" stroke="#4c86bc" stroke-width="1.500"/>
<text class="l" x="1832" y="550" textLength="130" lengthAdjust="spacingAndGlyphs" style="font-size:18px;fill:#5b90c4">RelativeLayout</text>
<text class="l" x="1832" y="571" textLength="201" lengthAdjust="spacingAndGlyphs" style="font-size:18px;fill:#5b90c4">activity_hello_android</text>
<rect x="1833" y="615" width="107" height="22" fill="none" stroke="#5e9ad0" stroke-width="1.600"/>
<text class="l" x="1846" y="634" textLength="82" lengthAdjust="spacingAndGlyphs" style="font-size:19.500px;fill:#6299cc">TextView</text>
<!-- guides -->
<g stroke="#bcbcbc" stroke-width="2.400" stroke-dasharray="10 6" fill="none">
<path d="M1236 435V1437M1791 435V1437"/>
<path d="M1197 474H1831M1197 1399H1831"/>
</g>
<path d="M1797 1438L1831 1405M1813 1438L1831 1422" stroke="#777" stroke-width="1.500"/>

<rect x="2482" y="223" width="4" height="1500" fill="#c0c0c0"/>
<!-- properties -->
<rect x="2486" y="223" width="463" height="1500" fill="#ececec"/>
<rect x="2486" y="272" width="463" height="4" fill="#c4c4c4"/>
<text class="s" x="2494" y="256" textLength="109" lengthAdjust="spacingAndGlyphs">Properties</text>
<g fill="#2b9ad6"><path d="M2807 238h17v-6l8 8-8 8v-6h-17z"/><path d="M2826 252h-17v-6l-8 8 8 8v-6h17z"/></g>
<rect x="2843" y="233" width="1.500" height="30" fill="#cfcfcf"/>
<use href="#gear" transform="translate(2870 248)"/><use href="#cgr" transform="translate(2886 245)"/>
<g transform="translate(2937 238) scale(-1 1)"><use href="#pin"/></g>

<!-- bottom borders -->
<rect x="738" y="1720" width="2212" height="3" fill="#c0c0c0"/>
<rect x="738" y="1723" width="2212" height="7" fill="#fff"/>
<rect x="738" y="1730" width="2212" height="2" fill="#c6c6c6"/>
<rect x="738" y="1732" width="2212" height="48" fill="#ececec"/>
<rect x="757" y="1730" width="102" height="50" fill="#fff"/><rect x="756" y="1730" width="2" height="50" fill="#c6c6c6"/>
<rect x="859" y="1730" width="102" height="50" fill="#d0d0d0"/><rect x="960" y="1730" width="2" height="50" fill="#c6c6c6"/>
<text class="s" x="776" y="1760" textLength="73" lengthAdjust="spacingAndGlyphs">Design</text>
<text class="s n" x="890" y="1760" textLength="49" lengthAdjust="spacingAndGlyphs" style="fill:#5a5a5a">Text</text>
<rect x="112" y="1780" width="2880" height="42" fill="#ececec"/>
<rect x="112" y="1780" width="2880" height="1.500" fill="#c6c6c6"/>
<rect x="112" y="1821.500" width="2880" height="1.500" fill="#c6c6c6"/>
<rect x="112" y="1823" width="2880" height="40" fill="#ececec"/>
<rect x="170" y="1790" width="26" height="26" fill="#777"/><rect x="173" y="1797" width="20" height="16" fill="#f4f4f4"/><path d="M176 1801l4 3-4 3M182 1808h6" fill="none" stroke="#555" stroke-width="1.300"/>
<text class="s" x="204" y="1810" textLength="94" lengthAdjust="spacingAndGlyphs">Terminal</text>
<use href="#a" transform="translate(347 1789)" fill="#7da812"/>
<text class="s" x="381" y="1810" textLength="202" lengthAdjust="spacingAndGlyphs"><tspan text-decoration="underline">6</tspan>: Android Monitor</text>
<rect x="633" y="1789" width="25" height="27" fill="#c4c4c4"/><rect x="633" y="1789" width="22" height="24" fill="#f4c68a"/><path d="M638 1795h12M638 1799h12M638 1803h12M638 1807h12" stroke="#7a6a50" stroke-width="1.300"/>
<text class="s" x="666" y="1810" textLength="128" lengthAdjust="spacingAndGlyphs"><tspan text-decoration="underline">0</tspan>: Messages</text>
<circle cx="844" cy="1796" r="5.500" fill="#fff" stroke="#888" stroke-width="1.500"/><circle cx="852" cy="1797" r="7" fill="#777"/><circle cx="855" cy="1804" r="6.500" fill="#f2b66e"/><rect x="849" y="1810" width="13" height="6" fill="#4a9fd4"/>
<text class="s" x="872" y="1810" textLength="65" lengthAdjust="spacingAndGlyphs">TODO</text>
<path d="M2549 1790h18a3 3 0 0 1 3 3v14a3 3 0 0 1-3 3h-3l-1 4-4-4h-10a3 3 0 0 1-3-3v-14a3 3 0 0 1 3-3z" fill="#b8b8b8"/>
<text class="s" x="2583" y="1810" textLength="102" lengthAdjust="spacingAndGlyphs">Event Log</text>
<rect x="2736" y="1792" width="22" height="23" fill="#8dc4e8" stroke="#777" stroke-width="2"/><rect x="2736" y="1791" width="23" height="3" fill="#3e7fb0"/><path d="M2741 1798h12M2741 1802h12M2741 1806h9M2741 1810h6" stroke="#455" stroke-width="1.300"/>
<text class="s" x="2768" y="1810" textLength="164" lengthAdjust="spacingAndGlyphs">Gradle Console</text>
<rect x="124" y="1831" width="26" height="23" fill="#c8c8c8" stroke="#666" stroke-width="2"/><rect x="122" y="1855" width="28" height="2" fill="#666"/>
<text class="s" x="174" y="1852" textLength="527" lengthAdjust="spacingAndGlyphs">Gradle build finished in 8s 775ms (moments ago)</text>
<text class="s n" x="2470" y="1852" textLength="38" lengthAdjust="spacingAndGlyphs" style="fill:#9a9a9a">n/a</text>
<text class="s n" x="2543" y="1852" textLength="37" lengthAdjust="spacingAndGlyphs" style="fill:#9a9a9a">n/a</text>
<text class="s n" x="2602" y="1852" textLength="248" lengthAdjust="spacingAndGlyphs" style="fill:#9a9a9a">Context: &lt;no context&gt;</text>
<rect x="2911" y="1842" width="12" height="12" rx="2" fill="#777"/><path d="M2907 1846v-6a4 4 0 0 1 8 0" fill="none" stroke="#777" stroke-width="1.800"/><rect x="2916" y="1846" width="2" height="5" fill="#fff"/>
<path d="M2959 1830h11q3 0 3 3v9h4v2h-24v-2h4v-9q0-3 2-3z" fill="#ababab"/><path d="M2956 1846h19q0 8-3 11h-13q-3-3-3-11z" fill="#bcbcbc"/>
</svg>
</body></html>
